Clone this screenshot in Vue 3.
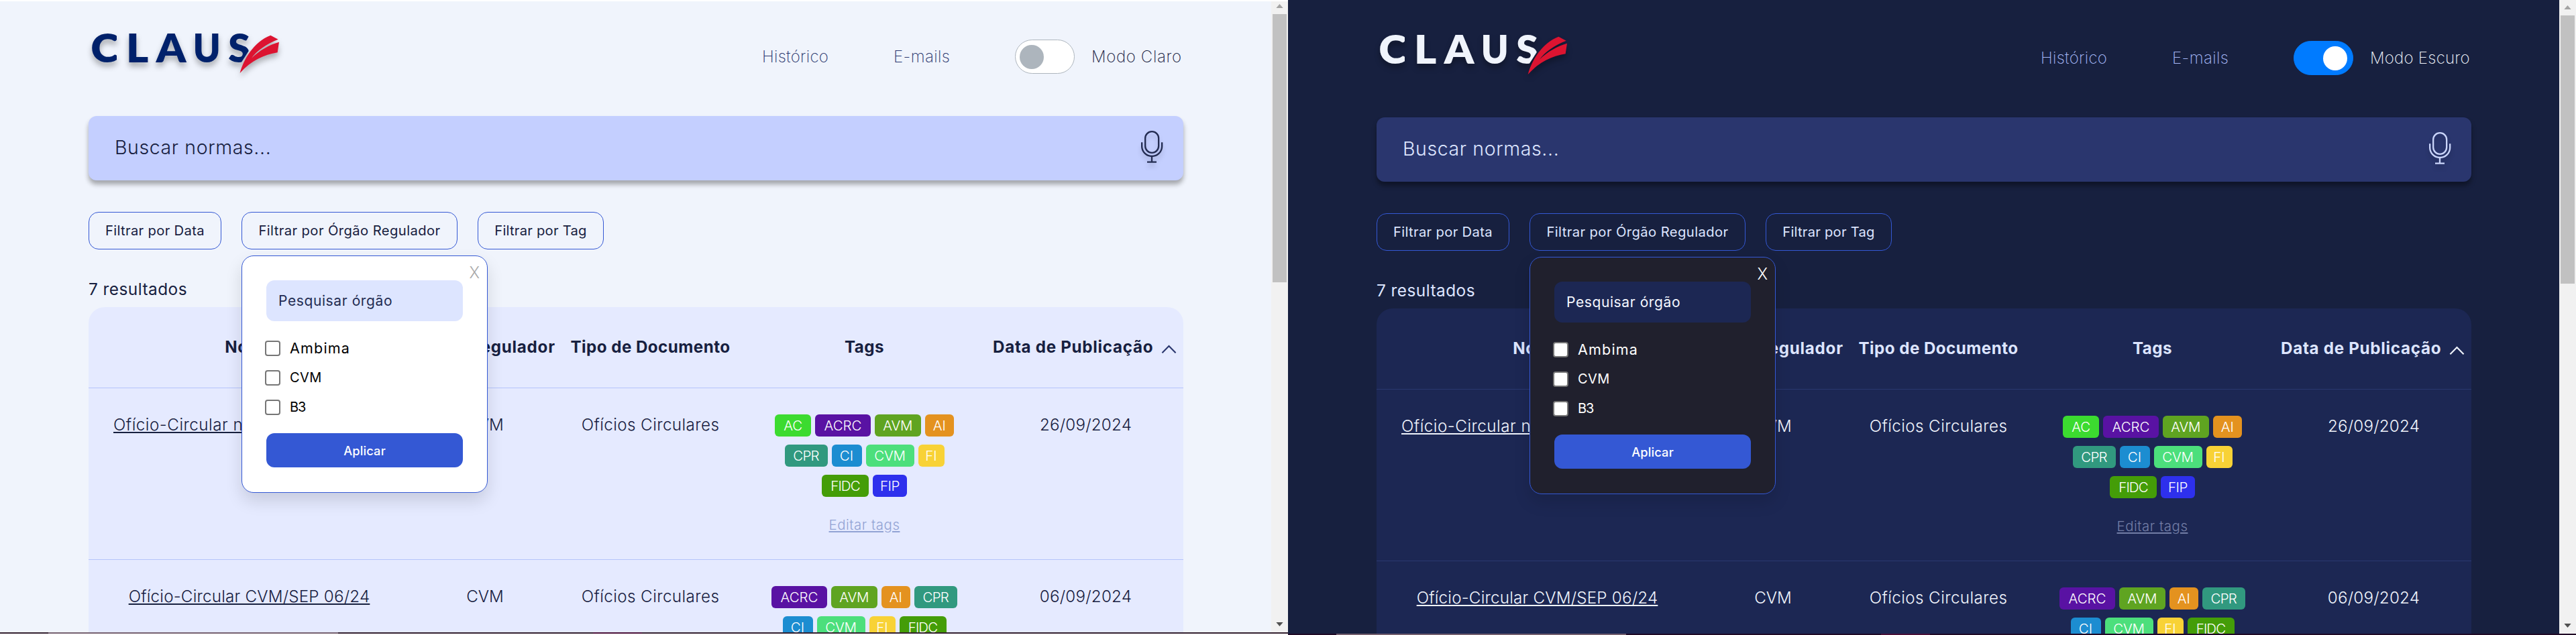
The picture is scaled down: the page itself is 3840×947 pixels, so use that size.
<script setup>
const panels = [
  { theme: 'light', mode: 'Modo Claro' },
  { theme: 'dark', mode: 'Modo Escuro' },
]
const columns = [
  { label: 'Nome', cls: 'h-name' },
  { label: 'Órgão Regulador', cls: 'h-org' },
  { label: 'Tipo de Documento', cls: 'h-type' },
  { label: 'Tags', cls: 'h-tags' },
]
const rows = [
  {
    name: 'Ofício-Circular nº 6/2024-CVM/SMI',
    cls: 'long',
    org: 'CVM',
    type: 'Ofícios Circulares',
    tags: ['AC', 'ACRC', 'AVM', 'AI', 'CPR', 'CI', 'CVM', 'FI', 'FIDC', 'FIP'],
    date: '26/09/2024',
  },
  {
    name: 'Ofício-Circular CVM/SEP 06/24',
    cls: 'short',
    org: 'CVM',
    type: 'Ofícios Circulares',
    tags: ['ACRC', 'AVM', 'AI', 'CPR', 'CI', 'CVM', 'FI', 'FIDC'],
    date: '06/09/2024',
  },
]
const regulators = [
  { label: 'Ambima', cls: 'wide' },
  { label: 'CVM', cls: '' },
  { label: 'B3', cls: 'tight' },
]
</script>

<template>
  <div class="stage">
    <section v-for="p in panels" :key="p.theme" class="panel" :class="p.theme">
      <div class="viewport">
        <main class="page">
          <header class="top">
            <svg class="logo" viewBox="0 0 960 300" role="img" aria-label="CLAUS">
              <defs>
                <clipPath :id="'cut-c-' + p.theme">
                  <rect x="40" y="40" width="122" height="170" />
                </clipPath>
                <clipPath :id="'cut-s-' + p.theme">
                  <polygon points="640,40 760,40 760,126 714,197 640,200" />
                </clipPath>
              </defs>
              <g class="letters">
                <g :clip-path="'url(#cut-c-' + p.theme + ')'">
                  <text x="46" y="188" textLength="127" lengthAdjust="spacingAndGlyphs">C</text>
                </g>
                <text x="204" y="188" textLength="100" lengthAdjust="spacingAndGlyphs">L</text>
                <text x="338" y="188" textLength="134" lengthAdjust="spacingAndGlyphs">A</text>
                <text x="503" y="188" textLength="123" lengthAdjust="spacingAndGlyphs">U</text>
                <g :clip-path="'url(#cut-s-' + p.theme + ')'">
                  <text x="661" y="188" textLength="98" lengthAdjust="spacingAndGlyphs">S</text>
                </g>
              </g>
              <path
                class="feather"
                transform="translate(630 30)"
                d="M220 38 L254 56 C200 78 160 105 135 140 C170 105 215 80 258 68 L251 115 C190 125 135 150 83 207 C98 148 145 66 220 38Z"
              />
            </svg>
            <nav class="nav">
              <a class="n-hist">Histórico</a>
              <a class="n-mail">E-mails</a>
              <span class="toggle"><i></i></span>
              <span class="mode">{{ p.mode }}</span>
            </nav>
          </header>

          <div class="search">
            <span>Buscar normas...</span>
            <svg class="mic" viewBox="0 0 240 240">
              <rect x="81.500" y="48.500" width="60" height="95" rx="30" />
              <path d="M66.500 97 V115 A45 44 0 0 0 156.500 115 V97" />
              <path d="M111 160 V184 M90 185 H132" />
            </svg>
          </div>

          <div class="filters">
            <button class="filter f-date">Filtrar por Data</button>
            <div class="anchor">
              <button class="filter f-org">Filtrar por Órgão Regulador</button>
              <div class="popup">
                <span class="close">X</span>
                <div class="field">Pesquisar órgão</div>
                <ul class="checks">
                  <li v-for="r in regulators" :key="r.label">
                    <i class="box"></i><span :class="r.cls">{{ r.label }}</span>
                  </li>
                </ul>
                <button class="apply">Aplicar</button>
              </div>
            </div>
            <button class="filter f-tag">Filtrar por Tag</button>
          </div>

          <p class="count">7 resultados</p>

          <div class="table">
            <div class="row head">
              <div v-for="c in columns" :key="c.label" :class="c.cls">{{ c.label }}</div>
              <div class="h-date">
                <span>Data de Publicação</span>
                <svg class="caret" viewBox="0 0 24 14"><path d="M1.500 12.500 L12 1.800 L22.500 12.500" /></svg>
              </div>
            </div>
            <div v-for="r in rows" :key="r.name" class="row body">
              <div><a class="link" :class="r.cls">{{ r.name }}</a></div>
              <div>{{ r.org }}</div>
              <div class="type">{{ r.type }}</div>
              <div class="tagcell">
                <div class="tags">
                  <span v-for="t in r.tags" :key="t" class="tag" :class="'t-' + t.toLowerCase()">{{ t }}</span>
                </div>
                <a class="edit">Editar tags</a>
              </div>
              <div class="date">{{ r.date }}</div>
            </div>
          </div>
        </main>
        <aside class="scroll">
          <svg class="arrow up" viewBox="0 0 12 7"><path d="M0 7 L6 0 L12 7Z" /></svg>
          <div class="thumb"></div>
          <svg class="arrow down" viewBox="0 0 12 7"><path d="M0 0 L6 7 L12 0Z" /></svg>
        </aside>
      </div>
      <div class="strip"><i></i><b></b><em></em><b></b></div>
    </section>
  </div>
</template>

<style>
body {
  background: #fff;
}
</style>

<style scoped>
.stage {
  display: flex;
  width: 3840px;
  height: 947px;
  overflow: hidden;
  font-family: Inter, 'Open Sans', sans-serif;
}
.panel {
  width: 1920px;
  height: 947px;
  display: flex;
  flex-direction: column;
  box-sizing: border-box;
}
.light {
  --bg: #f0f4fc;
  --text: #17203f;
  --nav: #2a366e;
  --mode: #17203f;
  --search: #c4cfff;
  --icon: #232c52;
  --table: #e5eaff;
  --line: #b5c4fa;
  --popup: #ffffff;
  --poptext: #000000;
  --field: #dde5ff;
  --fieldtext: #232c52;
  --close: #a9a9a9;
  --edit: #92a3d4;
  --logo: #00216b;
  --shade: rgba(0, 0, 0, 0.32);
  --caret: #2a366e;
  --cell: #17203f;
  padding-top: 2px;
  background: #fff;
}
.dark {
  --bg: #17203f;
  --text: #dde5ff;
  --nav: #a6b8f7;
  --mode: #f0f4fc;
  --search: #2a366e;
  --icon: #c9d4fa;
  --table: #1c2753;
  --line: #2a3870;
  --popup: #20202d;
  --poptext: #ffffff;
  --field: #1c2753;
  --fieldtext: #f5f7ff;
  --close: #ffffff;
  --edit: #737ea6;
  --logo: #f0f4fc;
  --shade: rgba(0, 0, 0, 0.38);
  --caret: #f0f4fc;
  --cell: #f0f4fc;
  background: #17203f;
}
.viewport {
  display: flex;
  height: 941px;
  overflow: hidden;
  background: var(--bg);
}
.dark .viewport {
  height: 945px;
}
.page {
  width: 1632px;
  padding: 0 131px 0 132px;
  margin-top: -2px;
  color: var(--text);
}
.dark .page {
  margin-top: 2px;
}
.top {
  height: 169px;
  margin-bottom: 4px;
  display: flex;
  justify-content: space-between;
  align-items: center;
}
.logo {
  width: 320px;
  height: 100px;
  margin: 30px 0 0 -12px;
  align-self: flex-start;
  overflow: visible;
  filter: drop-shadow(0 6px 4px rgba(0, 0, 0, 0.3));
}
.letters {
  font-family: Lato, sans-serif;
  font-weight: 800;
  font-size: 178px;
  fill: var(--logo);
}
.feather {
  fill: #dc1431;
}
.nav {
  display: flex;
  align-items: center;
  font-size: 24px;
  font-weight: 250;
  line-height: 30px;
  white-space: nowrap;
  color: var(--nav);
}
.n-hist {
  width: 101px;
  letter-spacing: 0.3px;
  margin-right: 95px;
}
.n-mail {
  width: 86px;
  letter-spacing: 0.4px;
  margin-right: 95px;
}
.toggle {
  width: 89px;
  height: 51px;
  box-sizing: border-box;
  border: 1px solid #adb5bd;
  border-radius: 26px;
  background: #fff;
  display: flex;
  align-items: center;
  padding: 0 6px;
}
.toggle i {
  width: 36px;
  height: 36px;
  border-radius: 50%;
  background: #adb5bd;
}
.dark .toggle {
  background: #007bff;
  border-color: #007bff;
  justify-content: flex-end;
  padding-right: 8px;
}
.dark .toggle i {
  background: #fff;
}
.mode {
  width: 137px;
  margin-left: 25px;
  letter-spacing: 0.65px;
  color: var(--mode);
}
.dark .mode {
  width: 151px;
  letter-spacing: 0.25px;
}
.search {
  height: 96px;
  border-radius: 12px;
  background: var(--search);
  box-shadow: 0 6px 7px var(--shade);
  display: flex;
  align-items: flex-start;
  justify-content: space-between;
  padding: 0 4px 0 39px;
}
.search span {
  font-size: 28.5px;
  line-height: 94px;
  letter-spacing: 0.6px;
  font-weight: 350;
}
.mic {
  width: 80px;
  height: 80px;
  margin-top: 7px;
  fill: none;
  stroke: var(--icon);
  stroke-width: 7;
  filter: drop-shadow(0 6px 3px rgba(0, 0, 0, 0.15));
}
.filters {
  margin-top: 47px;
  display: flex;
  gap: 30px;
}
.anchor {
  position: relative;
}
.filter {
  display: block;
  height: 56px;
  padding: 0;
  border: 1.5px solid #3458d4;
  border-radius: 15px;
  background: transparent;
  color: var(--text);
  font-family: inherit;
  font-size: 20.2px;
  line-height: 30px;
  white-space: nowrap;
}
.f-date {
  width: 198px;
  letter-spacing: 0.33px;
}
.f-org {
  width: 322px;
  letter-spacing: 0.42px;
}
.f-tag {
  width: 188px;
  letter-spacing: 0.24px;
}
.popup {
  position: absolute;
  z-index: 2;
  top: 65px;
  left: 0;
  width: 367px;
  height: 354px;
  box-sizing: border-box;
  padding: 36px 36px 0;
  border: 1.5px solid #3458d4;
  border-radius: 18px;
  background: var(--popup);
  color: var(--poptext);
  box-shadow: 0 12px 24px rgba(0, 0, 0, 0.13);
}
.close {
  position: absolute;
  top: 10px;
  right: 11px;
  font-size: 23.5px;
  line-height: 30px;
  font-weight: 350;
  color: var(--close);
}
.field {
  height: 61px;
  padding-left: 18px;
  border-radius: 12px;
  background: var(--field);
  color: var(--fieldtext);
  font-size: 21px;
  line-height: 62px;
  letter-spacing: 0.6px;
}
.checks {
  list-style: none;
  margin: 18px 0 0;
  padding: 0;
}
.checks li {
  height: 44px;
  display: flex;
  align-items: center;
  gap: 14px;
  font-size: 20px;
  letter-spacing: 0.4px;
}
.checks .wide {
  font-size: 21.5px;
  letter-spacing: 1.2px;
}
.checks .tight {
  letter-spacing: -1px;
}
.box {
  width: 23px;
  height: 23px;
  margin-left: -2px;
  box-sizing: border-box;
  border: 2px solid #767676;
  border-radius: 4px;
  background: #fff;
}
.apply {
  display: block;
  width: 293px;
  height: 51px;
  margin-top: 17px;
  padding: 0;
  border: 0;
  border-radius: 12px;
  background: #3458d4;
  color: #fff;
  font-family: inherit;
  font-size: 18.3px;
  font-weight: 500;
  letter-spacing: 0.15px;
}
.count {
  margin: 44px 0 12px;
  font-size: 24.4px;
  line-height: 30px;
  letter-spacing: 0.46px;
}
.table {
  border-radius: 24px 24px 0 0;
  background: var(--table);
}
.row {
  display: grid;
  grid-template-columns: 479px 224px 269px 369px 291px;
  border-bottom: 1.5px solid var(--line);
  text-align: center;
  white-space: nowrap;
  font-size: 24.2px;
  line-height: 30px;
}
.head {
  height: 120px;
  align-items: center;
  font-weight: 700;
}
.h-name {
  letter-spacing: 0.7px;
}
.h-org {
  letter-spacing: 0.72px;
}
.h-type {
  letter-spacing: 0.45px;
}
.h-tags {
  letter-spacing: 0.5px;
}
.h-date {
  display: flex;
  align-items: center;
  padding-left: 7px;
  letter-spacing: 0.7px;
}
.caret {
  width: 23px;
  height: 14px;
  margin: 5px 0 0 12px;
  fill: none;
  stroke: var(--caret);
  stroke-width: 2.2;
}
.body {
  height: 255px;
  font-weight: 300;
  color: var(--cell);
}
.body > div {
  padding-top: 40px;
}
.link {
  text-decoration: underline;
  text-decoration-thickness: 2px;
  text-underline-offset: 2px;
  text-decoration-skip-ink: none;
}
.long {
  display: inline-block;
  width: 405px;
  text-align: left;
  letter-spacing: 0.5px;
}
.short {
  letter-spacing: 0.2px;
}
.type {
  letter-spacing: 0.42px;
}
.date {
  letter-spacing: 0.2px;
}
.body > .tagcell {
  padding-top: 39px;
  display: flex;
  flex-direction: column;
  align-items: center;
}
.tags {
  width: 290px;
  display: flex;
  flex-wrap: wrap;
  justify-content: center;
  gap: 12px 6px;
}
.tag {
  height: 33px;
  border-radius: 6px;
  color: #fff;
  font-size: 20.5px;
  font-weight: 350;
  line-height: 34px;
}
.t-ac { width: 54px; background: #3cdb30; }
.t-acrc { width: 82.500px; background: #5912a3; }
.t-avm { width: 69px; background: #5fa421; letter-spacing: -0.2px; }
.t-ai { width: 43px; background: #e4921f; }
.t-cpr { width: 64px; background: #31997f; letter-spacing: -0.8px; }
.t-ci { width: 45px; background: #1c8dd1; }
.t-cvm { width: 72px; background: #4cdf7c; letter-spacing: -0.2px; }
.t-fi { width: 39px; background: #f8d236; }
.t-fidc { width: 70px; background: #449d08; letter-spacing: -0.9px; }
.t-fip { width: 51px; background: #2e30ed; letter-spacing: -0.4px; }
.edit {
  margin-top: 27px;
  color: var(--edit);
  font-size: 20.4px;
  font-weight: 350;
  letter-spacing: 0.55px;
  text-decoration: underline;
  text-decoration-thickness: 2px;
  text-underline-offset: 2px;
}
.scroll {
  width: 25px;
  height: 100%;
  background: #f1f1f1;
  display: flex;
  flex-direction: column;
  align-items: center;
}
.arrow {
  width: 11px;
  height: 6px;
  margin-top: 4px;
  fill: #a3a3a3;
}
.dark .up {
  margin-top: 8px;
}
.thumb {
  width: 21px;
  height: 400px;
  margin-top: 9px;
  background: #c1c1c1;
}
.down {
  margin: auto 0 9px;
  fill: #505050;
}
.strip {
  display: flex;
  height: 2px;
  background: #33202f;
}
.strip i {
  width: 432px;
  margin-left: 72px;
  background: #75606f;
}
.strip b {
  width: 380px;
}
.strip em {
  width: 73px;
  background: #4a1038;
}
.dark .strip {
  background: #200a26;
}
</style>
